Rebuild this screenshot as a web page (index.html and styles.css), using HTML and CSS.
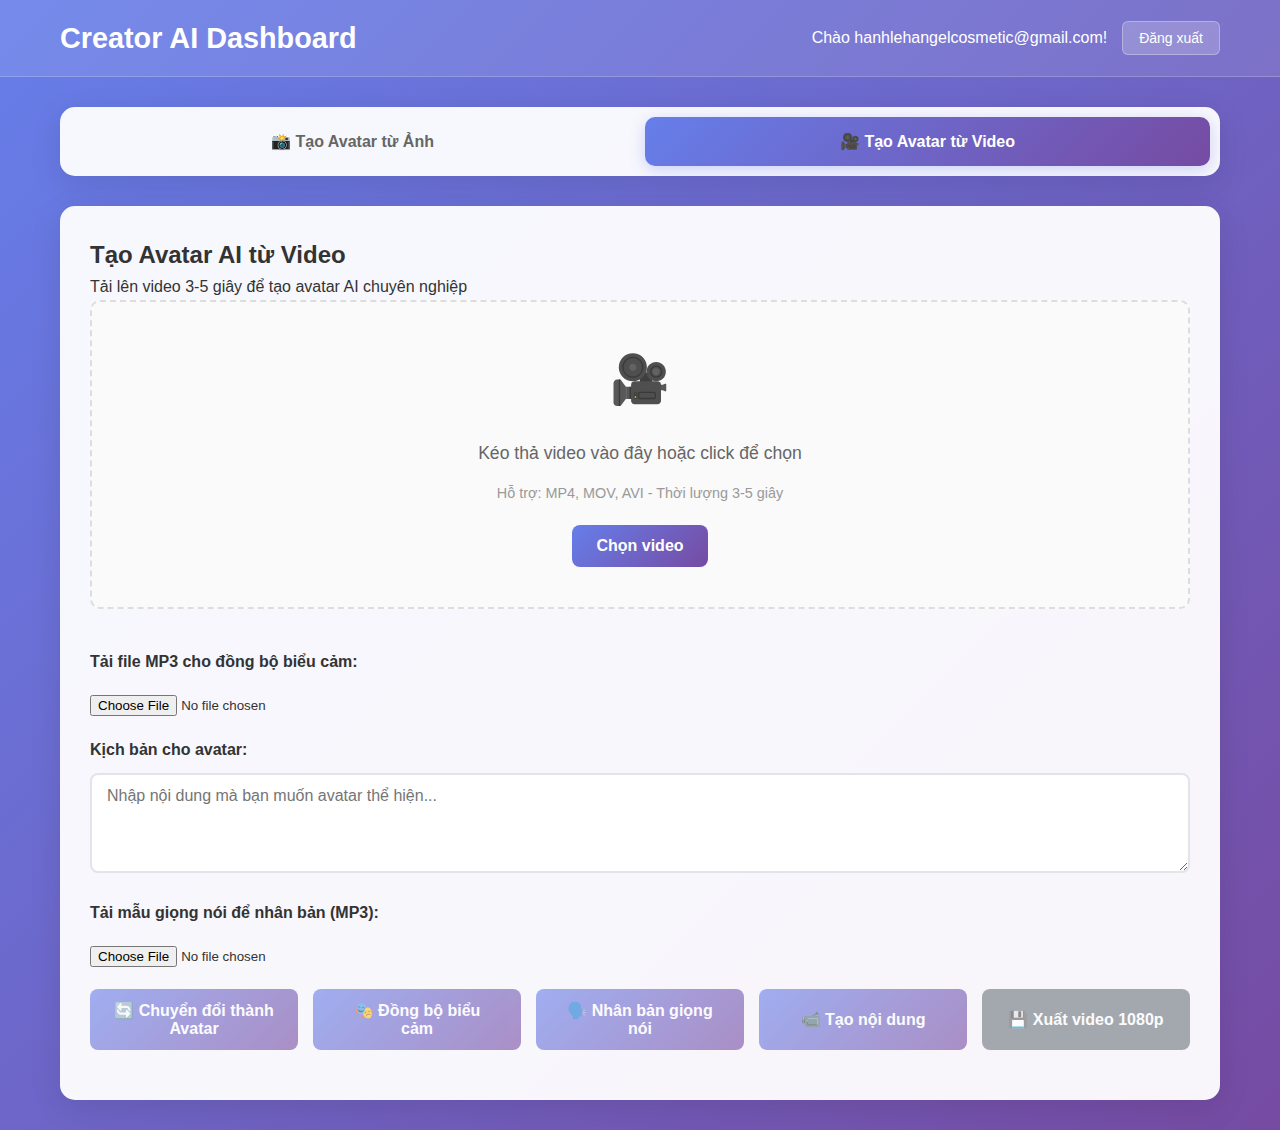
FILE: index.html
```html
<!DOCTYPE html>
<html lang="vi">
<head>
<meta charset="UTF-8">
<title>Creator AI Dashboard</title>
<link rel="stylesheet" href="styles.css">
</head>
<body>
<header class="header">
  <div class="header-content">
    <h1>Creator AI Dashboard</h1>
    <div class="user-info">
      <span>Chào hanhlehangelcosmetic@gmail.com!</span>
      <button class="logout-btn">Đăng xuất</button>
    </div>
  </div>
</header>
<main class="container">
  <nav class="tabs">
    <button class="tab">📸 Tạo Avatar từ Ảnh</button>
    <button class="tab active">🎥 Tạo Avatar từ Video</button>
  </nav>
  <section class="panel">
    <h2>Tạo Avatar AI từ Video</h2>
    <p>Tải lên video 3-5 giây để tạo avatar AI chuyên nghiệp</p>
    <div class="upload-area">
      <div class="upload-icon">🎥</div>
      <div class="upload-text">Kéo thả video vào đây hoặc click để chọn</div>
      <div class="upload-hint">Hỗ trợ: MP4, MOV, AVI - Thời lượng 3-5 giây</div>
      <button class="upload-btn">Chọn video</button>
    </div>
    <div class="controls">
      <div class="group">
        <label for="sync">Tải file MP3 cho đồng bộ biểu cảm:</label>
        <input class="file" id="sync" type="file" accept=".mp3">
      </div>
      <div class="group">
        <label for="script">Kịch bản cho avatar:</label>
        <textarea id="script" class="text-input" placeholder="Nhập nội dung mà bạn muốn avatar thể hiện..."></textarea>
      </div>
      <div class="group">
        <label for="voice">Tải mẫu giọng nói để nhân bản (MP3):</label>
        <input class="file" id="voice" type="file" accept=".mp3">
      </div>
      <div class="actions">
        <button class="action" disabled>🔄 Chuyển đổi thành Avatar</button>
        <button class="action" disabled>🎭 Đồng bộ biểu cảm</button>
        <button class="action" disabled>🗣️ Nhân bản giọng nói</button>
        <button class="action" disabled>📹 Tạo nội dung</button>
        <button class="action secondary" disabled>💾 Xuất video 1080p</button>
      </div>
    </div>
  </section>
</main>
</body>
</html>
```
FILE: styles.css
```css
* { margin: 0; padding: 0; box-sizing: border-box; }
body {
  font-family: "Liberation Sans", Arial, sans-serif;
  background: linear-gradient(135deg, #667eea 0%, #764ba2 100%);
  min-height: 100vh;
  color: #333;
}
button { font-family: inherit; border: none; }
.header {
  background: rgba(255, 255, 255, 0.1);
  border-bottom: 1px solid rgba(255, 255, 255, 0.2);
  height: 77px;
  padding: 0 20px;
}
.header-content {
  max-width: 1160px;
  height: 76px;
  margin: 0 auto;
  display: flex;
  justify-content: space-between;
  align-items: center;
  color: white;
}
.header h1 { font-size: 28.8px; }
.user-info { display: flex; align-items: center; gap: 15px; }
.logout-btn {
  background: rgba(255, 255, 255, 0.2);
  color: white;
  border: 1px solid rgba(255, 255, 255, 0.3);
  height: 34px;
  padding: 0 16px;
  border-radius: 6px;
  font-size: 14px;
}
.container { max-width: 1200px; margin: 0 auto; padding: 30px 20px; }
.tabs {
  display: flex;
  gap: 10px;
  background: rgba(255, 255, 255, 0.95);
  border-radius: 15px;
  padding: 10px;
  margin-bottom: 30px;
  box-shadow: 0 8px 32px rgba(0, 0, 0, 0.1);
}
.tab {
  flex: 1;
  height: 49px;
  background: transparent;
  border-radius: 10px;
  font-size: 16px;
  font-weight: 600;
  color: #666;
}
.tab.active {
  background: linear-gradient(135deg, #667eea, #764ba2);
  color: white;
  box-shadow: 0 4px 15px rgba(102, 126, 234, 0.3);
}
.panel {
  background: rgba(255, 255, 255, 0.95);
  border-radius: 15px;
  padding: 30px;
  height: 894px;
  box-shadow: 0 8px 32px rgba(0, 0, 0, 0.1);
}
.panel h2 { font-size: 24px; line-height: 38px; }
.panel p { font-size: 16px; line-height: 26px; }
.upload-area {
  height: 309px;
  border: 2px dashed #ddd;
  border-radius: 10px;
  background: #fafafa;
  text-align: center;
  padding: 40px;
}
.upload-icon { font-size: 48px; line-height: 75px; margin-bottom: 22px; }
.upload-text { font-size: 17.6px; line-height: 28px; color: #666; margin-bottom: 15px; }
.upload-hint { font-size: 14.4px; line-height: 23px; color: #999; margin-bottom: 20px; }
.upload-btn {
  background: linear-gradient(135deg, #667eea, #764ba2);
  color: white;
  padding: 12px 24px;
  border-radius: 8px;
  font-size: 16px;
  font-weight: 600;
}
.controls { padding-top: 40px; }
.group { display: flex; flex-direction: column; align-items: flex-start; }
.group label { font-size: 16px; font-weight: 600; line-height: 26px; margin-bottom: 10px; }
.file { margin: 10px 0 21px; height: 21px; }
.text-input {
  width: 100%;
  height: 100px;
  padding: 12px 15px;
  border: 2px solid #e1e5e9;
  border-radius: 8px;
  font-family: inherit;
  font-size: 16px;
  resize: vertical;
  margin-bottom: 27px;
}
.actions { display: flex; gap: 15px; margin-top: 1px; }
.action {
  flex: 1 1 0;
  min-width: 0;
  height: 61px;
  padding: 12px 24px;
  border-radius: 8px;
  font-size: 16px;
  font-weight: 600;
  color: white;
  background: linear-gradient(135deg, #667eea, #764ba2);
  opacity: 0.6;
}
.action.secondary { background: #6c757d; }
```
